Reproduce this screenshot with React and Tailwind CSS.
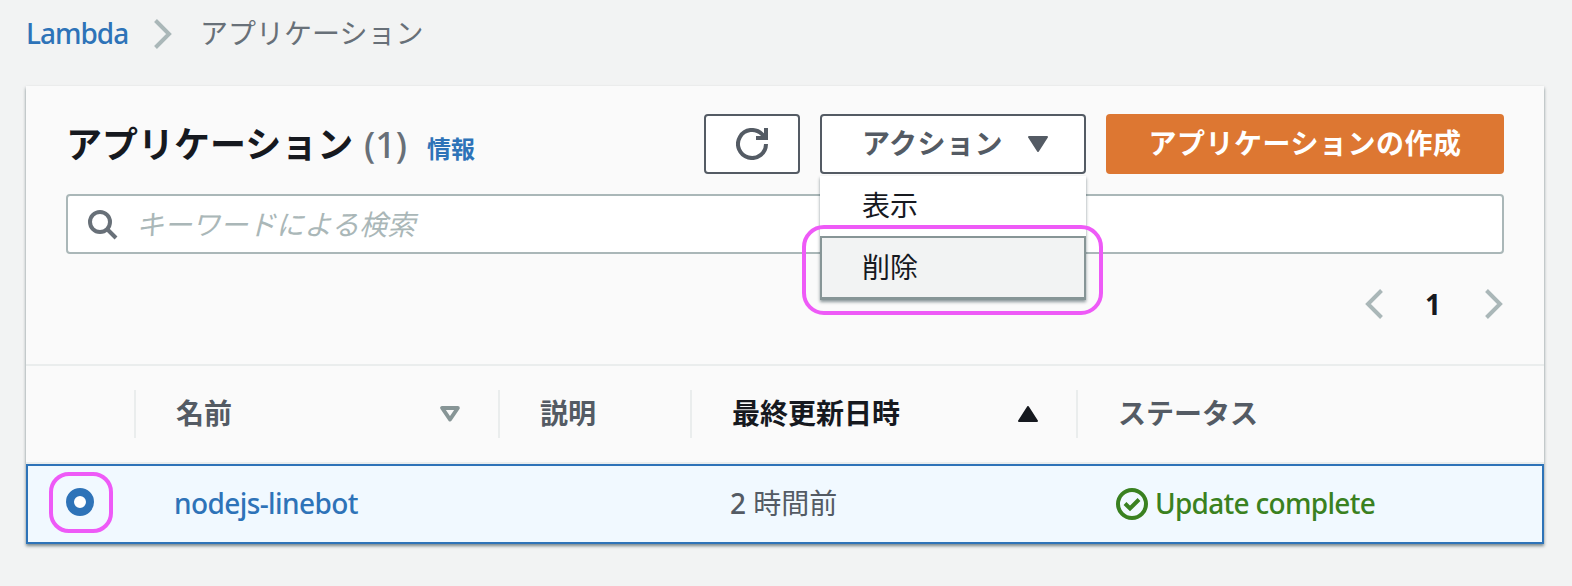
import React from 'react';

// Chevron used by the breadcrumb and the pagination
const Chevron = ({ className }) => (
  <svg className={className} width="18" height="32" viewBox="0 0 18 32" fill="none">
    <path d="M1.5 2.5 L15 16 L1.5 29.5" stroke="#aab7b8" strokeWidth="4" />
  </svg>
);

const RefreshIcon = () => (
  <svg width="32" height="32" viewBox="0 0 32 32" fill="none" stroke="#545b64" strokeWidth="4">
    <path d="M30 16 A14 14 0 1 1 26 6.2 L29 9.5" />
    <path d="M30 0 V10 H20" />
  </svg>
);

const SearchIcon = () => (
  <svg className="mt-px" width="30" height="30" viewBox="0 0 30 30" fill="none" stroke="#687078" strokeWidth="4">
    <circle cx="12" cy="12" r="10" />
    <path d="M19 19 L28 28" />
  </svg>
);

const CheckIcon = () => (
  <svg width="32" height="32" viewBox="0 0 32 32" fill="none" stroke="#3a8120" strokeWidth="4">
    <circle cx="16" cy="16" r="14" />
    <path d="M9 15.5 L14 20.5 L23 11.5" />
  </svg>
);

// Small sort / dropdown triangles
const TriangleDown = ({ color, hollow }) => (
  <svg width="20" height="16" viewBox="0 0 20 16" fill={hollow ? 'none' : color} stroke={color} strokeLinejoin="round" strokeWidth={hollow ? 4 : 2}>
    {hollow ? <path d="M2.2 2 H17.8 L10 13.5 Z" /> : <path d="M1 1 H19 L10 15 Z" />}
  </svg>
);

const TriangleUp = () => (
  <svg width="20" height="16" viewBox="0 0 20 16" fill="#16191f" stroke="#16191f" strokeLinejoin="round" strokeWidth="2">
    <path d="M10 1 L19 15 H1 Z" />
  </svg>
);

const Breadcrumb = () => (
  <nav className="flex h-[86px] pl-[26px] pt-[14px]">
    <a className="-mt-px h-10 w-[128px] leading-10 text-[#2e73b8] font-medium tracking-[-1px]">Lambda</a>
    <Chevron className="mt-1" />
    <span className="ml-[28px] h-10 leading-10 -mt-px text-[#687078]">アプリケーション</span>
  </nav>
);

const ActionMenu = () => (
  <div className="relative ml-5 h-[60px] w-[266px]">
    <button className="flex h-[60px] w-full items-center rounded-[4px] border-2 border-[#545b64] bg-white pl-10 text-[#545b64] font-bold tracking-[0.5px]">
      <span className="w-[166px] text-left leading-10 -mt-0.5">アクション</span>
      <TriangleDown color="#545b64" />
    </button>
    <ul className="absolute left-0 top-[62px] z-10 w-full bg-white text-[#16191f] shadow-[0_2px_3px_rgba(0,28,36,0.45)]">
      <li className="h-[60px] pl-[42px] leading-[58px]">表示</li>
      <li className="h-16 border-2 border-b-[3px] border-[#879596] bg-[#f2f3f3] pl-10 leading-[58px]">削除</li>
    </ul>
    {/* highlight round the delete item */}
    <div className="absolute -left-[18px] top-[111px] z-20 h-[90px] w-[301px] rounded-[22px] border-4 border-[#ee5af7]" />
  </div>
);

const CardHeader = () => (
  <div className="h-[278px] px-10 pt-7">
    <div className="flex h-[60px]">
      <h1 className="flex flex-1 text-[36px] leading-[62px] font-bold text-[#16191f]">
        <span className="w-[298px]">アプリケーション</span>
        <span className="w-[63px] font-medium text-[#687078]">(1)</span>
        <a className="text-[24px] leading-[70px] text-[#2e73b8]">情報</a>
      </h1>
      <button className="flex h-[60px] w-24 items-center justify-center rounded-[4px] border-2 border-[#545b64] bg-white">
        <RefreshIcon />
      </button>
      <ActionMenu />
      <button className="ml-5 h-[60px] w-[398px] rounded-[4px] bg-[#dd7732] pb-0.5 text-white font-bold tracking-[0.5px]">
        アプリケーションの作成
      </button>
    </div>
    <div className="mt-5 flex h-[60px] items-center rounded-[4px] border-2 border-[#aab7b8] bg-white pl-5">
      <SearchIcon />
      <span className="ml-[18px] italic text-[#aab7b8]">キーワードによる検索</span>
    </div>
    <div className="mt-[34px] flex h-8 items-center justify-end pr-px">
      <Chevron className="rotate-180" />
      <span className="w-[102px] pr-0.5 text-center font-bold text-[#16191f]">1</span>
      <Chevron />
    </div>
  </div>
);

const HeaderCell = ({ label, className, children }) => (
  <div className={`flex h-12 items-center border-l-2 border-[#eaeded] pl-10 ${className}`}>
    <span className="flex-1 -mt-0.5 leading-10">{label}</span>
    {children}
  </div>
);

const App = () => {
  return (
    <div className="h-[586px] w-[1572px] overflow-hidden whitespace-nowrap bg-[#f2f3f3] font-['Noto_Sans','Noto_Sans_CJK_JP',sans-serif] text-[28px]">
      <Breadcrumb />
      <main className="ml-[26px] h-[458px] w-[1518px] bg-[#fafafa] shadow-[0_2px_3px_rgba(0,28,36,0.5)]">
        <CardHeader />
        <div className="flex h-[100px] items-center border-y-2 border-[#eaeded] pl-[108px] font-bold text-[#545b64]">
          <HeaderCell label="名前" className="w-[364px] pr-[38px]">
            <TriangleDown color="#879596" hollow />
          </HeaderCell>
          <HeaderCell label="説明" className="w-[192px]" />
          <HeaderCell label="最終更新日時" className="w-[386px] pr-[38px] text-[#16191f]">
            <TriangleUp />
          </HeaderCell>
          <HeaderCell label="ステータス" className="flex-1" />
        </div>
        <div className="flex h-20 items-center border-2 border-[#2e73b8] bg-[#f1f9ff]">
          <div className="flex w-[146px] pl-[21px]">
            <div className="-mt-1 flex h-[61px] w-16 items-center justify-center rounded-[20px] border-4 border-[#ee5af7] pr-0.5">
              <div className="h-7 w-7 rounded-full border-8 border-[#2e73b8] bg-white" />
            </div>
          </div>
          <a className="-mt-0.5 w-[556px] text-[#2e73b8] font-medium tracking-[-0.6px]">nodejs-linebot</a>
          <span className="-mt-0.5 w-[386px] text-[#545b64]">
            <span className="font-medium">2</span> 時間前
          </span>
          <CheckIcon />
          <span className="-mt-0.5 ml-[7px] text-[#3a8120] font-medium tracking-[-0.7px]">Update complete</span>
        </div>
      </main>
    </div>
  );
};

export default App;
